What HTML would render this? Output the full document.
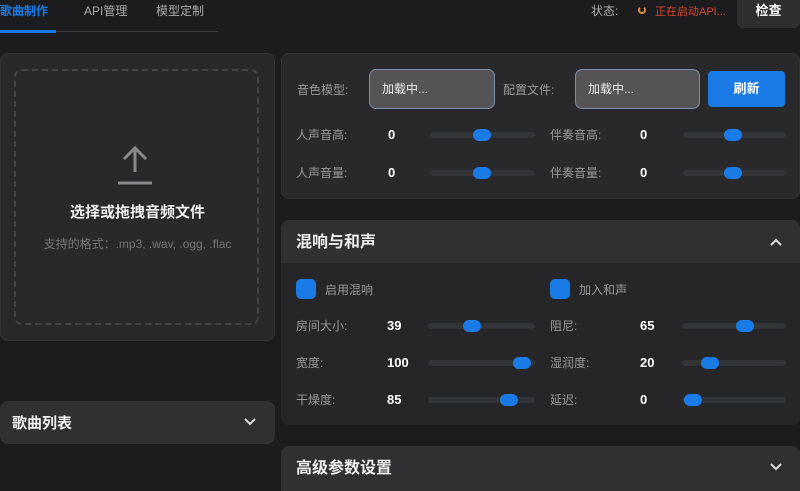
<!DOCTYPE html><html><head><meta charset="utf-8"><style>
*{margin:0;padding:0;box-sizing:border-box}
body{width:800px;height:485px;overflow:hidden;background:#1c1c1f;font-family:"Liberation Sans","Noto Sans CJK SC",sans-serif;color:#ddd;position:relative;line-height:16px}
.a{position:absolute}
.lbl{font-size:12px;color:#9a9a9a}
.val{font-size:13px;color:#fff;font-weight:bold}
.tr{position:absolute;height:6px;border-radius:3px;background:#333437}
.th{position:absolute;width:18px;height:12px;border-radius:6px;background:#1a7be6}
.card{position:absolute;background:#29292c;border-radius:8px}
.hdr{position:absolute;background:#303033;border-radius:8px 8px 0 0;font-size:16px;color:#eee;font-weight:bold;line-height:20px}
</style></head><body>
<div class="a" style="left:0;top:3px;font-size:12px;color:#1a7be6;font-weight:bold">歌曲制作</div>
<div class="a" style="left:84px;top:3px;font-size:12px;color:#aaa">API管理</div>
<div class="a" style="left:156px;top:3px;font-size:12px;color:#aaa">模型定制</div>
<div class="a" style="left:0;top:31px;width:218px;height:1px;background:#3a3a3d"></div>
<div class="a" style="left:0;top:30px;width:56px;height:3px;background:#1a7be6"></div>
<div class="a" style="left:591px;top:3px;font-size:12px;color:#aaa">状态:</div>
<div class="a" style="left:638px;top:6px;width:8px;height:8px;border-radius:50%;border:2px solid #e08a3a;border-top-color:transparent"></div>
<div class="a" style="left:655px;top:4px;font-size:11px;color:#d9472f">正在启动API...</div>
<div class="a" style="left:737px;top:0;width:63px;height:28px;background:#2f2f32;border-radius:0 0 6px 6px;font-size:13px;font-weight:bold;color:#fff;text-align:center;line-height:22px">检查</div>

<div class="card" style="left:0;top:53px;width:275px;height:288px;border:1px solid #333"></div>
<div class="a" style="left:14px;top:69px;width:245px;height:256px;border:2px dashed #444;border-radius:8px"></div>
<svg class="a" style="left:115px;top:144px" width="40" height="42"><path d="M20 4V28M9 15L20 4L31 15" stroke="#8a8a8a" stroke-width="3" fill="none"/><path d="M3 39H37" stroke="#8a8a8a" stroke-width="3"/></svg>
<div class="a" style="left:0;width:275px;top:205px;text-align:center;font-size:15px;font-weight:bold;color:#eee">选择或拖拽音频文件</div>
<div class="a" style="left:0;width:275px;top:236px;text-align:center;font-size:12px;color:#777">支持的格式：.mp3, .wav, .ogg, .flac</div>
<div class="card" style="left:0;top:401px;width:275px;height:43px;background:#303033"></div>
<div class="a" style="left:12px;top:416px;font-size:15px;font-weight:bold;color:#eee">歌曲列表</div>
<svg class="a" style="left:244px;top:418px" width="12" height="8"><path d="M1 1L6 6L11 1" stroke="#ddd" stroke-width="2" fill="none"/></svg>

<div class="card" style="left:281px;top:53px;width:519px;height:146px;border:1px solid #333"></div>
<div class="a lbl" style="left:297px;top:82px">音色模型:</div>
<div class="a" style="left:369px;top:69px;width:126px;height:40px;background:#555558;border:1px solid #7b8ea5;border-radius:7px;font-size:12px;color:#eee;padding:11px 12px">加载中...</div>
<div class="a lbl" style="left:503px;top:82px">配置文件:</div>
<div class="a" style="left:575px;top:69px;width:125px;height:40px;background:#555558;border:1px solid #7b8ea5;border-radius:7px;font-size:12px;color:#eee;padding:11px 12px">加载中...</div>
<div class="a" style="left:708px;top:71px;width:77px;height:36px;background:#1a7be6;border-radius:4px;font-size:13px;font-weight:bold;color:#fff;text-align:center;line-height:36px">刷新</div>
<div class="a lbl" style="left:296px;top:127px">人声音高:</div><div class="a val" style="left:388px;top:127px">0</div>
<div class="tr" style="left:430px;top:132px;width:105px"></div><div class="th" style="left:473px;top:129px"></div>
<div class="a lbl" style="left:550px;top:127px">伴奏音高:</div><div class="a val" style="left:640px;top:127px">0</div>
<div class="tr" style="left:683px;top:132px;width:103px"></div><div class="th" style="left:724px;top:129px"></div>
<div class="a lbl" style="left:296px;top:165px">人声音量:</div><div class="a val" style="left:388px;top:165px">0</div>
<div class="tr" style="left:430px;top:170px;width:105px"></div><div class="th" style="left:473px;top:167px"></div>
<div class="a lbl" style="left:550px;top:165px">伴奏音量:</div><div class="a val" style="left:640px;top:165px">0</div>
<div class="tr" style="left:683px;top:170px;width:103px"></div><div class="th" style="left:724px;top:167px"></div>

<div class="card" style="left:281px;top:220px;width:519px;height:205px;background:#262628;border-radius:8px"></div>
<div class="hdr" style="left:281px;top:220px;width:519px;height:43px;padding:13px 15px 0">混响与和声</div>
<svg class="a" style="left:770px;top:238px" width="12" height="8"><path d="M1 7L6 2L11 7" stroke="#ddd" stroke-width="2" fill="none"/></svg>
<div class="a" style="left:296px;top:279px;width:20px;height:20px;border-radius:5px;background:#1a7be6"></div>
<div class="a lbl" style="left:325px;top:282px">启用混响</div>
<div class="a" style="left:550px;top:279px;width:20px;height:20px;border-radius:5px;background:#1a7be6"></div>
<div class="a lbl" style="left:579px;top:282px">加入和声</div>
<div class="a lbl" style="left:296px;top:318px">房间大小:</div><div class="a val" style="left:387px;top:318px">39</div>
<div class="tr" style="left:428px;top:323px;width:107px"></div><div class="th" style="left:463px;top:320px"></div>
<div class="a lbl" style="left:550px;top:318px">阻尼:</div><div class="a val" style="left:640px;top:318px">65</div>
<div class="tr" style="left:682px;top:323px;width:104px"></div><div class="th" style="left:736px;top:320px"></div>
<div class="a lbl" style="left:296px;top:355px">宽度:</div><div class="a val" style="left:387px;top:355px">100</div>
<div class="tr" style="left:428px;top:360px;width:107px"></div><div class="th" style="left:513px;top:357px"></div>
<div class="a lbl" style="left:550px;top:355px">湿润度:</div><div class="a val" style="left:640px;top:355px">20</div>
<div class="tr" style="left:682px;top:360px;width:104px"></div><div class="th" style="left:701px;top:357px"></div>
<div class="a lbl" style="left:296px;top:392px">干燥度:</div><div class="a val" style="left:387px;top:392px">85</div>
<div class="tr" style="left:428px;top:397px;width:107px"></div><div class="th" style="left:500px;top:394px"></div>
<div class="a lbl" style="left:550px;top:392px">延迟:</div><div class="a val" style="left:640px;top:392px">0</div>
<div class="tr" style="left:682px;top:397px;width:104px"></div><div class="th" style="left:684px;top:394px"></div>

<div class="hdr" style="left:281px;top:446px;width:519px;height:45px;padding:13px 15px 0">高级参数设置</div>
<svg class="a" style="left:770px;top:463px" width="12" height="8"><path d="M1 1L6 6L11 1" stroke="#ddd" stroke-width="2" fill="none"/></svg>
</body></html>
